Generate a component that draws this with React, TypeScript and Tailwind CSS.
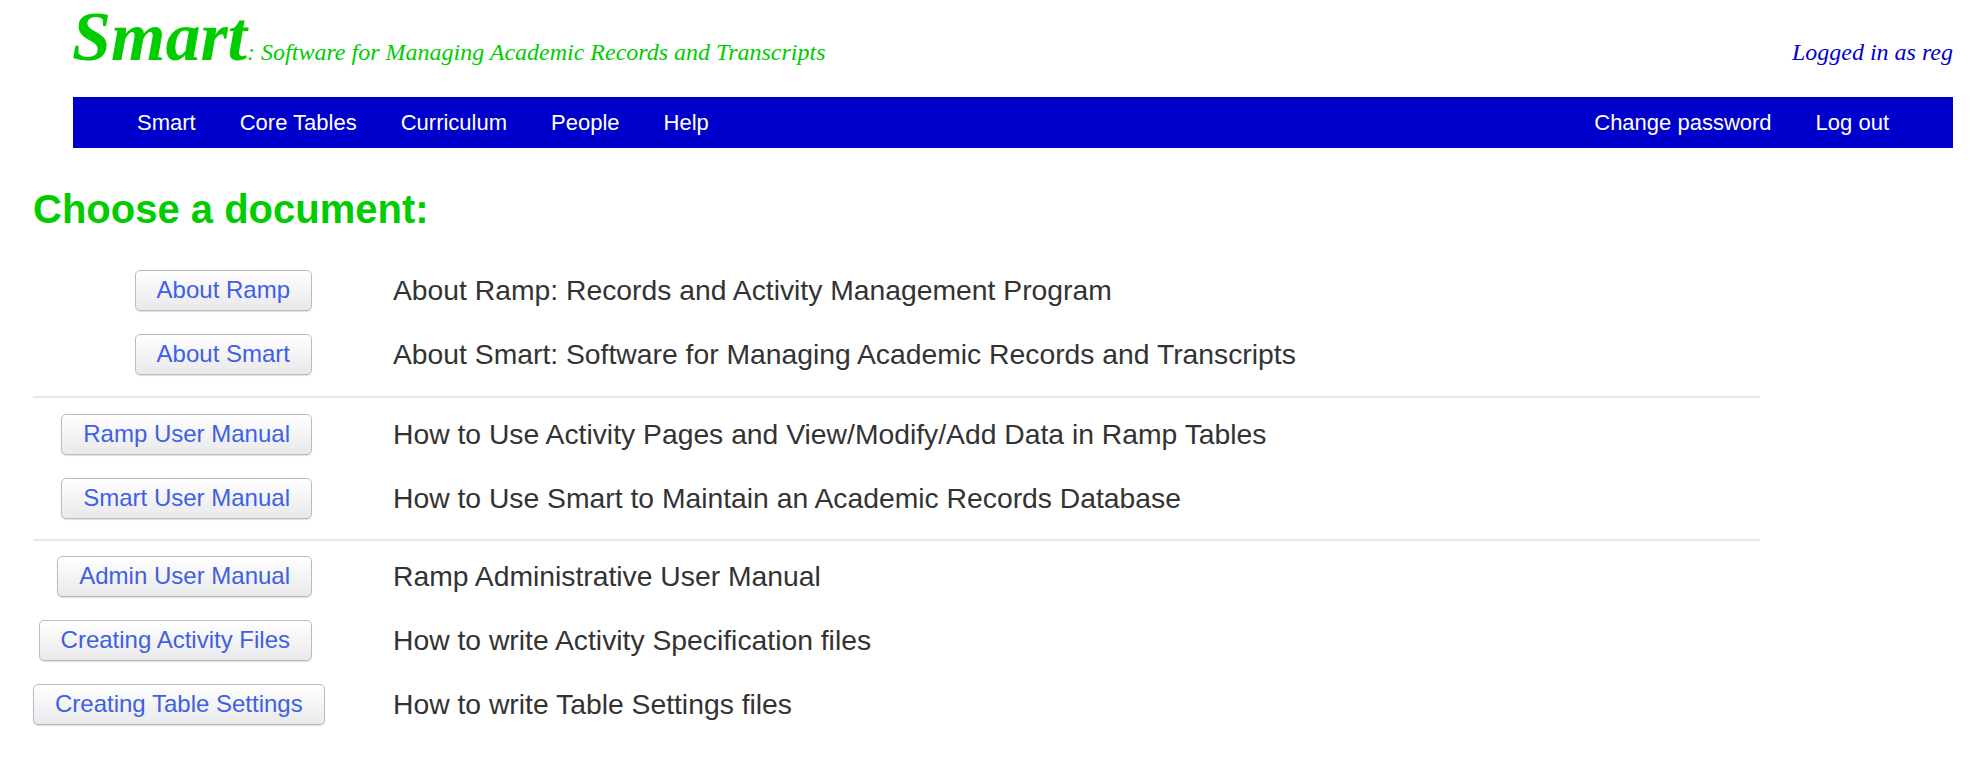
const navLeft = ["Smart", "Core Tables", "Curriculum", "People", "Help"];
const navRight = ["Change password", "Log out"];

type Doc = { label: string; text: string };

const groups: Doc[][] = [
  [
    { label: "About Ramp", text: "About Ramp: Records and Activity Management Program" },
    { label: "About Smart", text: "About Smart: Software for Managing Academic Records and Transcripts" },
  ],
  [
    { label: "Ramp User Manual", text: "How to Use Activity Pages and View/Modify/Add Data in Ramp Tables" },
    { label: "Smart User Manual", text: "How to Use Smart to Maintain an Academic Records Database" },
  ],
  [
    { label: "Admin User Manual", text: "Ramp Administrative User Manual" },
    { label: "Creating Activity Files", text: "How to write Activity Specification files" },
    { label: "Creating Table Settings", text: "How to write Table Settings files" },
  ],
];

function DocRow({ doc }: { doc: Doc }) {
  return (
    <div className="flex h-[64px] items-center">
      <div className="w-[279px] shrink-0 whitespace-nowrap text-right">
        <button
          type="button"
          className="inline-block h-[41px] rounded-[5px] border border-[#b9b8c9] bg-gradient-to-b from-white to-[#e9e9ec] px-[21px] text-[24px] leading-none text-[#3f5fe4] shadow-[0_1px_1px_rgba(0,0,0,0.12)]"
        >
          {doc.label}
        </button>
      </div>
      <div className="pl-[81px] text-[28.3px] text-[#333333]">{doc.text}</div>
    </div>
  );
}

export default function App() {
  return (
    <div className="min-h-[762px] bg-white font-['Liberation_Sans',Arial,sans-serif]">
      <div className="pl-[72px] pr-[35px]">
        <div className="flex items-baseline justify-between pt-[2px] font-['Liberation_Serif','Times_New_Roman',serif] italic">
          <div className="flex items-baseline text-[#00cc00]">
            <span className="text-[70px] font-bold leading-none">Smart</span>
            <span className="text-[24px] leading-none">
              : Software for Managing Academic Records and Transcripts
            </span>
          </div>
          <span className="text-[24px] leading-none text-[#0000cc]">Logged in as reg</span>
        </div>
        <nav className="ml-[1px] mt-[25px] flex h-[51px] items-center justify-between bg-[#0000cc] px-[42px] text-[22px] text-white">
          <div className="flex">
            {navLeft.map((item) => (
              <a key={item} className="cursor-pointer px-[22px]">
                {item}
              </a>
            ))}
          </div>
          <div className="flex">
            {navRight.map((item) => (
              <a key={item} className="cursor-pointer px-[22px]">
                {item}
              </a>
            ))}
          </div>
        </nav>
      </div>

      <div className="pl-[33px]">
        <h1 className="mt-[40px] text-[40px] font-bold leading-[43px] text-[#00cc00]">
          Choose a document:
        </h1>
        <div className="mt-[27px] w-[1727px]">
          {groups.map((group, gi) => (
            <div key={gi}>
              {gi === 1 && <div className="mb-[4px] mt-[10px] h-[2px] bg-[#e8e8e8]" />}
              {gi === 2 && <div className="mb-[3px] mt-[9px] h-[2px] bg-[#e8e8e8]" />}
              {group.map((doc) => (
                <DocRow key={doc.label} doc={doc} />
              ))}
            </div>
          ))}
        </div>
      </div>
    </div>
  );
}
